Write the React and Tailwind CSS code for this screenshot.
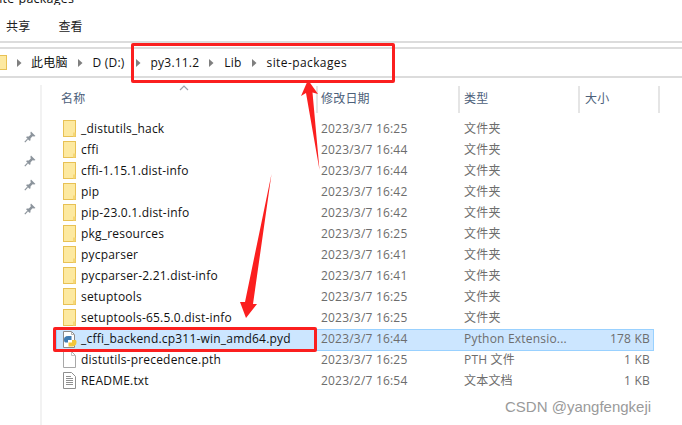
const names = [
  ["_distutils_hack", "2023/3/7 16:25"],
  ["cffi", "2023/3/7 16:44"],
  ["cffi-1.15.1.dist-info", "2023/3/7 16:44"],
  ["pip", "2023/3/7 16:42"],
  ["pip-23.0.1.dist-info", "2023/3/7 16:42"],
  ["pkg_resources", "2023/3/7 16:25"],
  ["pycparser", "2023/3/7 16:41"],
  ["pycparser-2.21.dist-info", "2023/3/7 16:41"],
  ["setuptools", "2023/3/7 16:25"],
  ["setuptools-65.5.0.dist-info", "2023/3/7 16:25"],
];

function Folder() {
  return (
    <svg width="13" height="17" viewBox="0 0 13 17" className="shrink-0">
      <rect x="0.5" y="0.5" width="12" height="16" fill="#fde9a0" stroke="#e8c154" />
      <path d="M10 16.5V12.5H12.5V16.5Z" fill="#f6d776" />
    </svg>
  );
}
function Chevron() {
  return (
    <svg width="6" height="8" viewBox="0 0 6 8" className="shrink-0 block">
      <path d="M1 0L5.5 4L1 8V0Z" fill="#7f7f7f" />
    </svg>
  );
}
function Pin() {
  return (
    <svg width="12" height="12" viewBox="0 0 12 12">
      <path d="M7 0.5L11.5 5L10.2 5.6L8.6 5.2L6.6 7.2L6.4 9.4L5.4 9.8L2.2 6.6L2.7 5.6L4.8 5.4L6.8 3.4L6.4 1.8Z" fill="#8c949c" />
      <path d="M3.6 8.2L0.8 11.2" stroke="#8c949c" strokeWidth="1.2" />
    </svg>
  );
}
function PyFile() {
  return (
    <svg width="14" height="17" viewBox="0 0 14 17" className="shrink-0">
      <path d="M0.5 0.5H8.5L11.5 3.5V16.5H0.5Z" fill="#fff" stroke="#8a8a8a" />
      <path d="M8.5 0.5V3.5H11.5" fill="none" stroke="#b0b0b0" />
      <path d="M1 8.5C1 5.5 3.5 5 5.5 5H8.5V9H5V11.5H2.5C1.5 11.5 1 10.5 1 8.5Z" fill="#3f7cb3" />
      <path d="M13.5 11C13.5 14.5 11 15.5 9 15.5H5.5V11.5H9V9H12C13 9 13.5 9.5 13.5 11Z" fill="#f2c53c" />
    </svg>
  );
}
function BlankFile() {
  return (
    <svg width="13" height="17" viewBox="0 0 13 17" className="shrink-0">
      <path d="M0.5 0.5H8.5L12.5 4.5V16.5H0.5Z" fill="#fff" stroke="#a8a8a8" />
      <path d="M8.5 0.5V4.5H12.5" fill="none" stroke="#c4c4c4" />
    </svg>
  );
}
function TextFile() {
  return (
    <svg width="13" height="17" viewBox="0 0 13 17" className="shrink-0">
      <path d="M0.5 0.5H8.5L12.5 4.5V16.5H0.5Z" fill="#fff" stroke="#8f8f8f" />
      <path d="M3 4.5H8M3 6.5H10M3 8.5H10M3 10.5H10M3 12.5H10" stroke="#8f8f8f" />
    </svg>
  );
}

function Row({ icon, name, date, type, size, selected }) {
  return (
    <div className={`flex items-center w-[598px] text-[12px] ${selected ? "h-[22px] mt-px -mb-[2px] pb-[2px] bg-[#cce6ff] border border-[#99d1ff]" : "h-[21px]"}`}>
      <div className={`flex items-center w-[265px] shrink-0 ${selected ? "pl-[6px]" : "pl-[7px]"} gap-[5px]`}>
        <div className="w-[13px] flex justify-center">{icon}</div>
        <span className="text-[#111] whitespace-nowrap">{name}</span>
      </div>
      <span className={`w-[143px] shrink-0 text-[#6d6d6d] whitespace-nowrap ${selected ? "-ml-px" : ""}`}>{date}</span>
      <span className="w-[124px] shrink-0 text-[#6d6d6d] whitespace-nowrap">{type}</span>
      <span className="w-[62px] shrink-0 text-right text-[#6d6d6d] whitespace-nowrap">{size}</span>
    </div>
  );
}

export default function App() {
  return (
    <div
      className="relative w-[682px] h-[425px] overflow-hidden bg-white text-[12px] tracking-[0.2px] text-[#111]"
      style={{ fontFamily: '"Open Sans","Noto Sans CJK SC",sans-serif' }}
    >
      <div className="h-[41px] relative">
        <div className="h-[5px] overflow-hidden">
          <div className="-mt-[9px] -ml-[7px] text-[12.5px] leading-[16px] whitespace-nowrap">site-packages</div>
        </div>
        <div className="flex gap-[28px] pl-[6px] pt-[14px] leading-[16px] text-[#222]">
          <span>共享</span>
          <span>查看</span>
        </div>
      </div>
      <div className="h-[6px] border-t-2 border-[#dcdcdc]" />
      <div className="h-[31px] border-t-2 border-b-2 border-[#dcdcdc] flex items-center">
        <div className="w-[7px] h-[15px] bg-[#fde9a0] border border-l-0 border-[#e8c154] mr-[9px]" />
        <Chevron />
        <span className="ml-[9px]">此电脑</span>
        <span className="ml-[9px]"><Chevron /></span>
        <span className="ml-[10px]">D (D:)</span>
        <span className="ml-[10px]"><Chevron /></span>
        <span className="ml-[10px]">py3.11.2</span>
        <span className="ml-[9px]"><Chevron /></span>
        <span className="ml-[10px]">Lib</span>
        <span className="ml-[9px]"><Chevron /></span>
        <span className="ml-[10px] tracking-[0.4px]">site-packages</span>
      </div>
      <div className="flex h-[348px]">
        <div className="w-[42px] shrink-0 border-r-2 border-[#f2f2f2] mt-[7px] flex flex-col items-end pr-[4px] pt-[46px] gap-[12px]">
          <Pin /><Pin /><Pin /><Pin />
        </div>
        <div className="flex-1 min-w-0 pl-[14px]">
          <div className="relative flex items-stretch h-[27px] mt-[8px] leading-[16px] text-[#4c607a]">
            <div className="w-[260px] pl-[5px] pt-[5px] flex-none">名称</div>
            <div className="w-[142px] flex-none border-l-2 border-[#e5e5e5] pl-[3px] pt-[5px]">修改日期</div>
            <div className="w-[120px] flex-none border-l-2 border-[#e5e5e5] pl-[4px] pt-[5px]">类型</div>
            <div className="w-[82px] flex-none border-x-2 border-[#e5e5e5] pl-[5px] pt-[5px]">大小</div>
            <svg width="10" height="6" viewBox="0 0 10 6" className="absolute left-[123px] -top-px">
              <path d="M1 5L5 1L9 5" fill="none" stroke="#9aa3ad" strokeWidth="1.2" />
            </svg>
          </div>
          <div className="mt-[5px]">
            {names.map(([n, d]) => (
              <Row key={n} icon={<Folder />} name={n} date={d} type="文件夹" size="" />
            ))}
            <Row selected icon={<PyFile />} name="_cffi_backend.cp311-win_amd64.pyd" date="2023/3/7 16:44" type="Python Extensio..." size="178 KB" />
            <Row icon={<BlankFile />} name="distutils-precedence.pth" date="2023/3/7 16:25" type="PTH 文件" size="1 KB" />
            <Row icon={<TextFile />} name="README.txt" date="2023/2/7 16:54" type="文本文档" size="1 KB" />
          </div>
        </div>
      </div>

      {/* annotations */}
      <div className="absolute left-[131px] top-[43px] w-[264px] h-[40px] border-[3px] border-[#fb1f1f] rounded-[2px]" />
      <div className="absolute left-[53px] top-[327px] w-[264px] h-[25px] border-[3px] border-[#fb1f1f] rounded-[2px]" />
      <svg width="682" height="425" className="absolute left-0 top-0 pointer-events-none">
        <polygon points="308,80 318,94 312.5,92.5 319.5,170 306,93 301,96" fill="#fb1f1f" />
        <polygon points="271.5,174 253,304 257,304 246,318 240,302 245,302" fill="#fb1f1f" />
      </svg>
      <div className="absolute left-[505px] top-[397px] text-[15px] tracking-normal leading-[20px] text-[#9a9a9a] whitespace-nowrap" style={{ fontFamily: '"Liberation Sans",sans-serif' }}>
        CSDN @yangfengkeji
      </div>
    </div>
  );
}
